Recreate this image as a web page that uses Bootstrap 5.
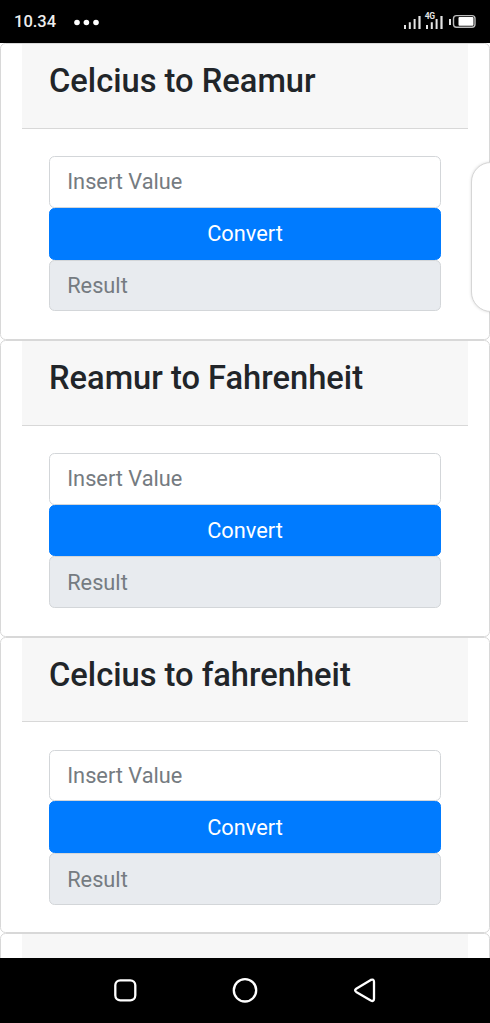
<!DOCTYPE html>
<html lang="en">
<head>
<meta charset="utf-8">
<meta name="viewport" content="width=device-width, initial-scale=1">
<title>Temperature Converter</title>
<link href="https://cdn.jsdelivr.net/npm/bootstrap@5.3.0/dist/css/bootstrap.min.css" rel="stylesheet">
<style>
  body { font-family: Roboto, sans-serif; font-size: 21.78px; color: #212529; }
  .screen { height: 1023px; }
  .status-bar { height: 43px; font-size: 16.5px; font-weight: 500; color: #eee; padding-left: 14px; }
  .status-bar .clock { width: 43px; padding-top: 1px; }
  .nav-bar { height: 65.5px; }
  .converter { flex: none; height: 296.8px; border: 1.5px solid #d8d8d8; border-radius: 5.5px; padding: 0 21px; }
  .converter .card-header { height: 84.9px; padding: 18px 27px 0; background: #f7f7f7; border-bottom: 1.5px solid #d8d8d8; border-radius: 0; }
  .converter h4 { font-size: 32.67px; line-height: 39.2px; font-weight: 500; color: #212529; white-space: nowrap; }
  .converter .card-body { padding: 27.2px; }
  .converter .form-control, .converter .btn { height: 51.8px; font-size: 21.78px; line-height: 1.5; border-radius: 5.5px; padding: 0 17px; }
  .converter .btn { padding-top: 1px; }
  .converter .form-control { border: 1.5px solid #d3d6d9; }
  .converter .form-control::placeholder { color: #757b81; }
  .converter .form-control:disabled { background: #e8ebef; }
  .converter .btn { background: #007bff; border-color: #007bff; }
  .edge-handle { top: 162px; left: 471px; width: 40px; height: 150px; border: 1.5px solid #d6d6d6; border-radius: 22px; box-shadow: 0 0 3px #00000026; }
</style>
</head>
<body class="overflow-hidden">
<div class="screen d-flex flex-column overflow-hidden position-relative">
  <header class="status-bar bg-black d-flex align-items-center flex-shrink-0">
    <span class="clock">10.34</span>
    <svg class="ms-3" width="30" height="10" fill="#fff"><circle cx="4" cy="5.5" r="2.8"/><circle cx="13.4" cy="5.5" r="2.8"/><circle cx="23" cy="5.5" r="2.8"/></svg>
    <svg class="ms-auto" width="90" height="43" viewBox="400 0 90 43" fill="#e4e4e4">
      <path d="M404 25h2v4h-2zM408.8 22.3h2V29h-2zM413.600 19h2v10h-2zM418.400 16h2.200v13h-2.200zM426 25h2v4h-2zM430.800 22.300h2V29h-2zM435.600 19h2v10h-2zM440.400 16h2.200v13h-2.200zM449 19h2v6h-2z"/>
      <text x="424.700" y="18.500" font-family="Roboto, sans-serif" font-size="8.500" font-weight="700" letter-spacing="-.3">4G</text>
      <rect x="453.500" y="15.600" width="21.500" height="11.600" rx="3" fill="none" stroke="#bbb" stroke-width="1.400"/>
      <rect x="458.500" y="17" width="15" height="8.800" rx="1" fill="#fff"/>
    </svg>
  </header>

  <main class="flex-grow-1 overflow-hidden d-flex flex-column bg-white">
    <section class="card converter">
      <div class="card-header"><h4 class="m-0">Celcius to Reamur</h4></div>
      <div class="card-body">
        <input class="form-control" type="text" placeholder="Insert Value">
        <button class="btn btn-primary d-block w-100" type="button">Convert</button>
        <input class="form-control" type="text" placeholder="Result" disabled>
      </div>
    </section>
    <section class="card converter">
      <div class="card-header"><h4 class="m-0">Reamur to Fahrenheit</h4></div>
      <div class="card-body">
        <input class="form-control" type="text" placeholder="Insert Value">
        <button class="btn btn-primary d-block w-100" type="button">Convert</button>
        <input class="form-control" type="text" placeholder="Result" disabled>
      </div>
    </section>
    <section class="card converter">
      <div class="card-header"><h4 class="m-0">Celcius to fahrenheit</h4></div>
      <div class="card-body">
        <input class="form-control" type="text" placeholder="Insert Value">
        <button class="btn btn-primary d-block w-100" type="button">Convert</button>
        <input class="form-control" type="text" placeholder="Result" disabled>
      </div>
    </section>
    <section class="card converter">
      <div class="card-header"></div>
    </section>
  </main>

  <div class="edge-handle position-absolute bg-white"></div>

  <nav class="nav-bar bg-black flex-shrink-0 d-flex justify-content-center align-items-center">
    <svg width="490" height="65" viewBox="0 958 490 65" fill="none" stroke="#fff" stroke-width="2.300" stroke-linejoin="round">
      <rect x="115.300" y="980.300" width="20" height="20" rx="5"/>
      <circle cx="245" cy="990.300" r="11.200"/>
      <path d="M356.200 988.700 370.800 979.900Q373.900 978.600 374 981.800V998.800Q373.900 1002 370.800 1000.500L356.200 991.900Q354 990.300 356.200 988.700Z"/>
    </svg>
  </nav>
</div>
<script src="https://cdn.jsdelivr.net/npm/bootstrap@5.3.0/dist/js/bootstrap.bundle.min.js"></script>
</body>
</html>
